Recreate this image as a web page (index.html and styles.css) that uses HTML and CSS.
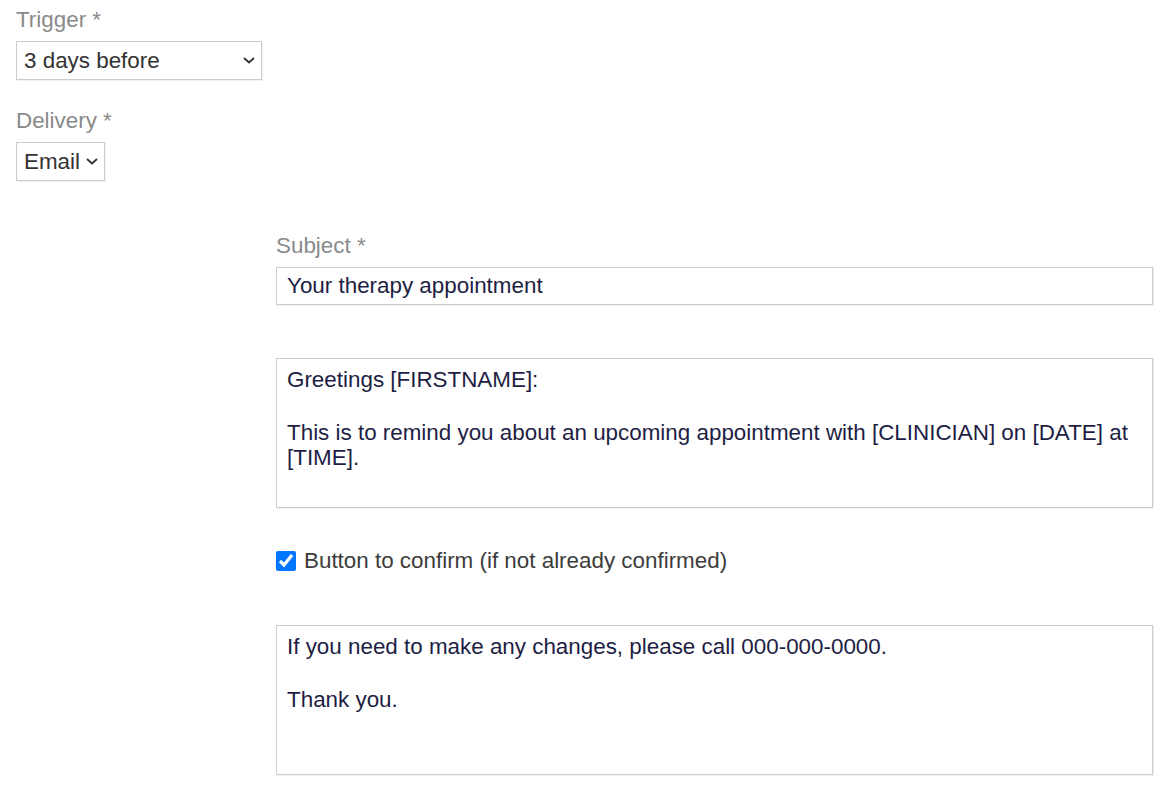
FILE: index.html
```html
<!DOCTYPE html>
<html lang="en">
<head>
  <meta charset="UTF-8" />
  <meta name="viewport" content="width=device-width, initial-scale=1.0"/>
  <title>Reminder Settings</title>
  <link rel="stylesheet" href="styles.css">
</head>
<body>
  <div class="page">
    <!-- Trigger -->
    <div class="field trigger-field">
      <label class="field-label" for="trigger">Trigger *</label>
      <span class="select-wrap">
        <select id="trigger" class="select trigger-select">
          <option>3 days before</option>
          <option>2 days before</option>
          <option>1 day before</option>
        </select>
        <svg class="chevron" width="12" height="7" viewBox="0 0 12 7"><path d="M1 1l5 4.5L11 1" fill="none" stroke="#333" stroke-width="1.8"/></svg>
      </span>
    </div>

    <!-- Delivery -->
    <div class="field delivery-field">
      <label class="field-label" for="delivery">Delivery *</label>
      <span class="select-wrap">
        <select id="delivery" class="select">
          <option>Email</option>
          <option>SMS</option>
        </select>
        <svg class="chevron" width="12" height="7" viewBox="0 0 12 7"><path d="M1 1l5 4.5L11 1" fill="none" stroke="#333" stroke-width="1.8"/></svg>
      </span>
    </div>

    <!-- Email content -->
    <div class="email-section">
      <div class="field">
        <label class="field-label" for="subject">Subject *</label>
        <input type="text" id="subject" class="text-input" value="Your therapy appointment" />
      </div>

      <div class="text-area intro-text" contenteditable="true">
        <p>Greetings [FIRSTNAME]:</p>
        <p>This is to remind you about an upcoming appointment with [CLINICIAN] on [DATE] at [TIME].</p>
      </div>

      <label class="check-row">
        <input type="checkbox" class="check" checked />
        <span>Button to confirm (if not already confirmed)</span>
      </label>

      <div class="text-area outro-text" contenteditable="true">
        <p>If you need to make any changes, please call 000-000-0000.</p>
        <p>Thank you.</p>
      </div>
    </div>
  </div>
</body>
</html>
```

FILE: styles.css
```css
body {
    font-family: "Liberation Sans", Arial, sans-serif;
    font-size: 22.4px;
    line-height: 25px;
    margin: 0;
    padding: 0;
    background-color: #fff;
}

.page {
    padding: 7px 16px;
}

.field {
    display: flex;
    flex-direction: column;
    align-items: flex-start;
}

.field-label {
    color: #8a8a8a;
    margin-bottom: 9px;
}

.trigger-field {
    margin-bottom: 28px;
}

.delivery-field {
    margin-bottom: 52px;
}

/* Selects */
.select-wrap {
    position: relative;
    display: inline-block;
}

.select {
    -webkit-appearance: none;
    appearance: none;
    font-family: inherit;
    font-size: 22.4px;
    color: #333;
    background: #fff;
    height: 39px;
    padding: 0 24px 0 7px;
    border: 1px solid #ccc;
    border-radius: 0;
    box-shadow: 1px 1px 1px rgba(0, 0, 0, 0.05);
}

.trigger-select {
    width: 246px;
}

.chevron {
    position: absolute;
    right: 7px;
    top: 16px;
    pointer-events: none;
}

/* Email section */
.email-section {
    margin-left: 260px;
    display: flex;
    flex-direction: column;
}

.email-section .field {
    align-items: stretch;
}

.text-input,
.text-area {
    font-family: inherit;
    font-size: 22.4px;
    line-height: 25px;
    color: #1e1e44;
    background: #fff;
    border: 1px solid #ccc;
    border-radius: 0;
    box-shadow: 1px 1px 1px rgba(0, 0, 0, 0.06);
    box-sizing: border-box;
    width: 100%;
    margin: 0;
}

.text-input {
    height: 38px;
    padding: 5px 10px;
}

.text-area {
    height: 150px;
    padding: 8px 10px;
    overflow: hidden;
    outline: none;
}

.text-area p {
    margin: 0;
}

.text-area p + p {
    margin-top: 28px;
}

.intro-text {
    margin-top: 53px;
}

.check-row {
    display: flex;
    align-items: center;
    margin-top: 40px;
    color: #3c3c3c;
    height: 25px;
}

.check {
    width: 20px;
    height: 20px;
    margin: 0 8px 0 0;
}

.outro-text {
    margin-top: 52px;
}
```
